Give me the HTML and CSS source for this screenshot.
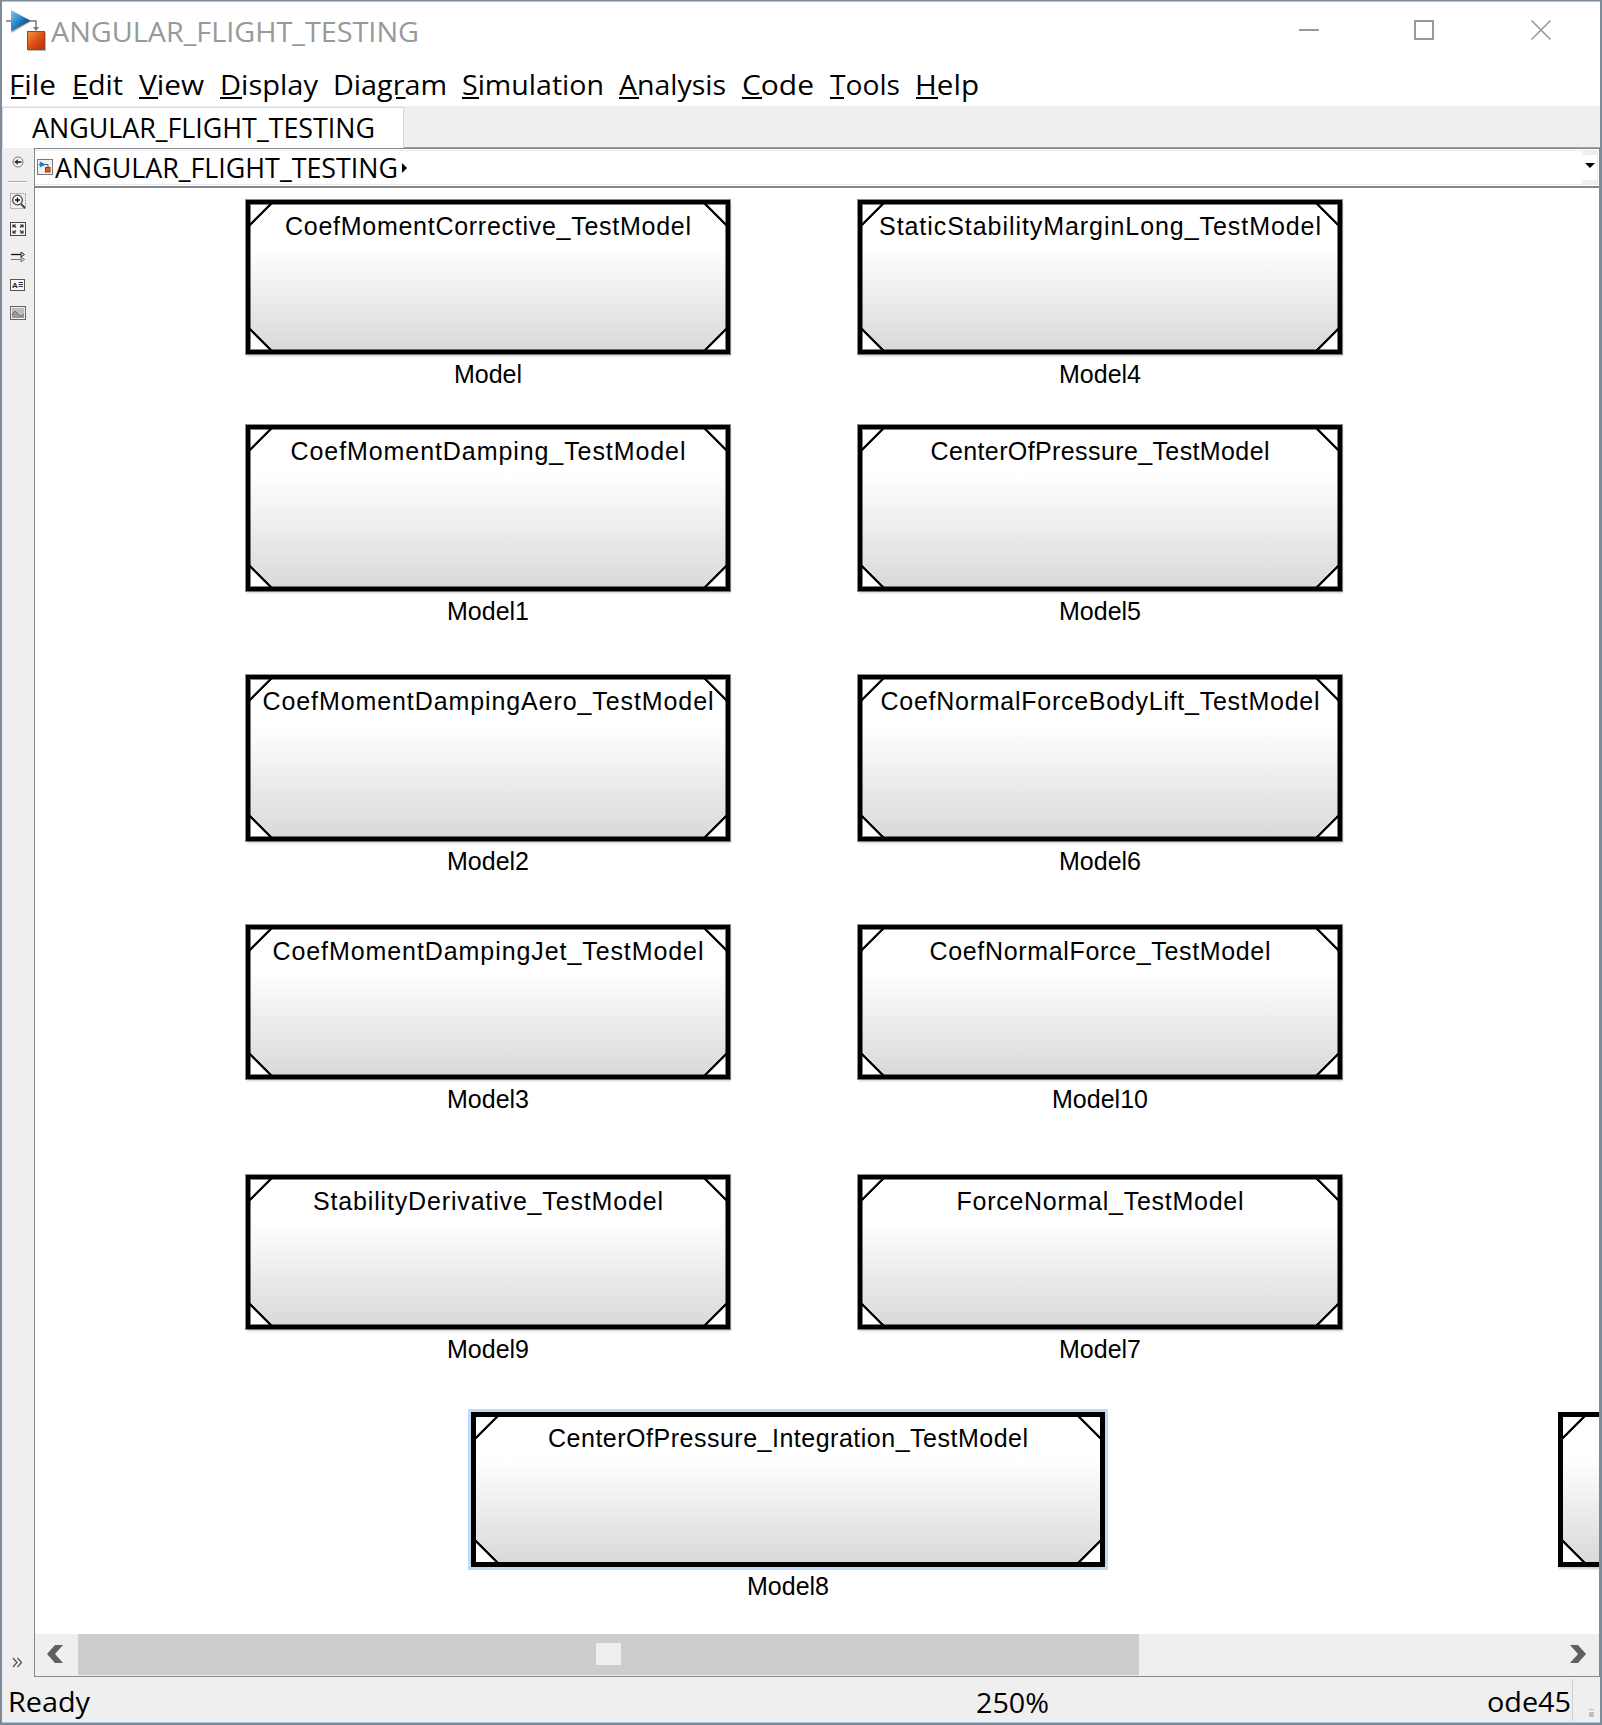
FILE: index.html
```html
<!DOCTYPE html>
<html lang="en">
<head>
<meta charset="utf-8">
<title>ANGULAR_FLIGHT_TESTING</title>
<link rel="stylesheet" href="styles.css">
</head>
<body>
<svg width="0" height="0" class="defs">
  <defs>
    <linearGradient id="blue" x1="0" y1="0" x2="1" y2="1"><stop offset="0" stop-color="#8cc8ee"/><stop offset=".4" stop-color="#2f8fce"/><stop offset=".75" stop-color="#0c4a8a"/></linearGradient>
    <linearGradient id="orange" x1="0" y1="0" x2="1" y2="1"><stop offset="0" stop-color="#f0a040"/><stop offset=".45" stop-color="#e0561a"/><stop offset="1" stop-color="#b02c08"/></linearGradient>
  </defs>
</svg>
<div class="window">
  <header class="titlebar">
    <svg class="app-icon" width="42" height="44" viewBox="0 0 42 44">
      <path d="M0 12h6M24 12h6v9" fill="none" stroke="#777" stroke-width="1.400"/>
      <path d="M27 18h6l-3 4z" fill="#777"/>
      <path d="M6 2.500V24L26 12z" fill="#888" opacity=".6"/>
      <path d="M5 1V22.500L24.500 11.800z" fill="url(#blue)"/>
      <rect x="22" y="23.500" width="18" height="18.500" fill="#888" opacity=".6"/>
      <rect x="21.500" y="22.500" width="17" height="18" fill="url(#orange)" stroke="#a8401c"/>
    </svg>
    <svg class="ui-text title" width="380" height="50"><text x="1" y="34" textLength="368" lengthAdjust="spacingAndGlyphs">ANGULAR_FLIGHT_TESTING</text></svg>
    <div class="controls">
      <svg class="minimize" width="22" height="22"><path d="M1 11h20" stroke="#999" stroke-width="2"/></svg>
      <svg width="22" height="22"><rect x="2" y="2" width="18" height="18" fill="none" stroke="#999" stroke-width="2"/></svg>
      <svg width="22" height="22"><path d="M1.500 1.500L20.500 20.500M20.500 1.500L1.500 20.500" stroke="#999" stroke-width="1.600"/></svg>
    </div>
  </header>
  <nav class="menubar">
    <svg class="ui-text" width="62" height="44"><text x="-1" y="33" textLength="47" lengthAdjust="spacingAndGlyphs">File</text><path d="M1 36h15.500"/></svg>
    <svg class="ui-text" width="67" height="44"><text x="0" y="33" textLength="51" lengthAdjust="spacingAndGlyphs">Edit</text><path d="M1 36h15"/></svg>
    <svg class="ui-text" width="81" height="44"><text x="0" y="33" textLength="65" lengthAdjust="spacingAndGlyphs">View</text><path d="M0 36h19"/></svg>
    <svg class="ui-text" width="113" height="44"><text x="0" y="33" textLength="98" lengthAdjust="spacingAndGlyphs">Display</text><path d="M0 36h22"/></svg>
    <svg class="ui-text" width="129" height="44"><text x="0" y="33" textLength="114" lengthAdjust="spacingAndGlyphs">Diagram</text><path d="M63 36h9.500"/></svg>
    <svg class="ui-text" width="157" height="44"><text x="0" y="33" textLength="142" lengthAdjust="spacingAndGlyphs">Simulation</text><path d="M0 36h17"/></svg>
    <svg class="ui-text" width="123" height="44"><text x="0" y="33" textLength="107" lengthAdjust="spacingAndGlyphs">Analysis</text><path d="M0 36h20"/></svg>
    <svg class="ui-text" width="88" height="44"><text x="0" y="33" textLength="72" lengthAdjust="spacingAndGlyphs">Code</text><path d="M0 36h20"/></svg>
    <svg class="ui-text" width="86" height="44"><text x="0" y="33" textLength="70" lengthAdjust="spacingAndGlyphs">Tools</text><path d="M0 36h14"/></svg>
    <svg class="ui-text" width="70" height="44"><text x="-1" y="33" textLength="64" lengthAdjust="spacingAndGlyphs">Help</text><path d="M0 36h22"/></svg>
  </nav>
  <div class="tabs">
    <div class="tab"><svg class="ui-text small" width="360" height="38"><text x="0" y="30" textLength="343" lengthAdjust="spacingAndGlyphs">ANGULAR_FLIGHT_TESTING</text></svg></div>
    <div class="tab-rest"></div>
  </div>
  <div class="workspace">
    <aside class="palette">
      <svg class="p-back" width="12" height="12" viewBox="0 0 12 12"><circle cx="6" cy="6" r="5" fill="#f8f8f8" stroke="#777"/><path d="M9.500 6H5" stroke="#333" stroke-width="1.800"/><path d="M2.200 6l3.600-3v6z" fill="#333"/></svg>
      <div class="rule"></div>
      <svg class="p-zoom" width="16" height="16" viewBox="0 0 16 16"><rect x=".5" y=".5" width="15" height="15" fill="none" stroke="#999" stroke-dasharray="2 1"/><circle cx="7.500" cy="7" r="4.800" fill="#fff" stroke="#444" stroke-width="1.300"/><path d="M5 7h5M7.500 4.500v5" stroke="#111" stroke-width="1.400"/><path d="M11 11l4 4" stroke="#444" stroke-width="2"/></svg>
      <svg class="p-fit" width="16" height="14" viewBox="0 0 16 14"><rect x=".5" y=".5" width="15" height="13" fill="#f7f7f7" stroke="#444"/><path d="M3 5.500V3h3M3 3l3 2.500M13 5.500V3h-3M13 3l-3 2.500M3 8.500V11h3M3 11l3-2.500M13 8.500V11h-3M13 11l-3-2.500" fill="none" stroke="#333" stroke-width="1.200"/></svg>
      <svg class="p-arrows" width="16" height="12" viewBox="0 0 16 12"><path d="M1 3.500h11" stroke="#111" stroke-width="1.300"/><path d="M11 1.200l3.500 2.300-3.500 2.300z" fill="#eee" stroke="#222"/><path d="M1 8.500h11" stroke="#777"/><path d="M11 6.200l3.500 2.300-3.500 2.300z" fill="#eee" stroke="#666"/></svg>
      <svg class="p-note" width="15" height="12" viewBox="0 0 15 12"><rect x=".5" y=".5" width="14" height="11" fill="#f8f8f8" stroke="#555"/><text x="2" y="8.800">A</text><path d="M8.500 3.500h4.500M8.500 5.500h4.500M8.500 7.500h4.500" stroke="#333"/></svg>
      <svg class="p-image" width="16" height="14" viewBox="0 0 16 14"><rect x=".5" y=".5" width="15" height="13" fill="#eee" stroke="#666"/><rect x="2" y="2" width="12" height="10" fill="#bdbdbd"/><path d="M2 9C4 4 6 5 8 8s4 2 6 0v4H2z" fill="#999"/><path d="M2 9C4 4 6 5 8 8s4 2 6 0" fill="none" stroke="#666"/></svg>
      <svg class="p-more" width="11" height="11" viewBox="0 0 11 11"><path d="M1 1l4 4.500-4 4.500M5.500 1l4 4.500-4 4.500" fill="none" stroke="#555" stroke-width="1.300"/></svg>
    </aside>
    <main class="editor">
      <div class="breadcrumb">
        <svg class="crumb-icon" width="16" height="16" viewBox="0 0 16 16"><rect x=".5" y=".5" width="15" height="15" fill="#eef0f2" stroke="#777"/><path d="M2 5.500h1M8 5.500h3v3" fill="none" stroke="#555"/><path d="M2.800 2.500v6l6-3z" fill="#1f7fc0"/><rect x="8.500" y="8.500" width="4.500" height="4.500" fill="#e0602a" stroke="#a83210"/></svg>
        <svg class="ui-text small" width="344" height="32"><text x="1" y="25.500" textLength="343" lengthAdjust="spacingAndGlyphs">ANGULAR_FLIGHT_TESTING</text></svg>
        <svg class="crumb-arrow" width="6" height="10"><path d="M0 0l5 5-5 5z"/></svg>
        <div class="drop"><svg width="10" height="5"><path d="M0 0h10L5 5z"/></svg></div>
      </div>
      <div class="canvas">
        <div class="node c1 r1"><div class="box"><svg><text x="242" y="35" textLength="406">CoefMomentCorrective_TestModel</text></svg></div><div class="name">Model</div></div>
        <div class="node c2 r1"><div class="box"><svg><text x="242" y="35" textLength="442">StaticStabilityMarginLong_TestModel</text></svg></div><div class="name">Model4</div></div>
        <div class="node c1 r2"><div class="box tall"><svg><text x="242" y="35" textLength="395">CoefMomentDamping_TestModel</text></svg></div><div class="name">Model1</div></div>
        <div class="node c2 r2"><div class="box tall"><svg><text x="242" y="35" textLength="339">CenterOfPressure_TestModel</text></svg></div><div class="name">Model5</div></div>
        <div class="node c1 r3"><div class="box tall"><svg><text x="242" y="35" textLength="451">CoefMomentDampingAero_TestModel</text></svg></div><div class="name">Model2</div></div>
        <div class="node c2 r3"><div class="box tall"><svg><text x="242" y="35" textLength="439">CoefNormalForceBodyLift_TestModel</text></svg></div><div class="name">Model6</div></div>
        <div class="node c1 r4"><div class="box"><svg><text x="242" y="35" textLength="431">CoefMomentDampingJet_TestModel</text></svg></div><div class="name">Model3</div></div>
        <div class="node c2 r4"><div class="box"><svg><text x="242" y="35" textLength="341">CoefNormalForce_TestModel</text></svg></div><div class="name">Model10</div></div>
        <div class="node c1 r5"><div class="box"><svg><text x="242" y="35" textLength="350">StabilityDerivative_TestModel</text></svg></div><div class="name">Model9</div></div>
        <div class="node c2 r5"><div class="box"><svg><text x="242" y="35" textLength="287">ForceNormal_TestModel</text></svg></div><div class="name">Model7</div></div>
        <div class="node wide selected r6"><div class="box"><svg><text x="317" y="35" textLength="480">CenterOfPressure_Integration_TestModel</text></svg></div><div class="name">Model8</div></div>
        <div class="node edge r6"><div class="box"></div></div>
      </div>
      <div class="scrollbar">
        <div class="arrow left"><svg width="16" height="18"><path d="M8 0h8L8 9l8 9H8L0 9z"/></svg></div>
        <div class="thumb"><div class="grip"></div></div>
        <div class="track"></div>
        <div class="arrow"><svg width="16" height="18"><path d="M8 0H0l8 9-8 9h8l8-9z"/></svg></div>
      </div>
    </main>
  </div>
  <footer class="status">
    <svg class="ui-text" width="100" height="44"><text x="-2" y="35" textLength="82" lengthAdjust="spacingAndGlyphs">Ready</text></svg>
    <svg class="ui-text zoom" width="80" height="44"><text x="0" y="36" textLength="73" lengthAdjust="spacingAndGlyphs">250%</text></svg>
    <svg class="ui-text solver" width="85" height="44"><text x="1" y="35" textLength="84" lengthAdjust="spacingAndGlyphs">ode45</text></svg>
    <div class="size-grip"></div>
  </footer>
</div>
</body>
</html>
```
FILE: styles.css
```css
* { box-sizing: border-box; }
body { margin: 0; background: #fff; }
svg { display: block; flex: none; }
.defs { position: absolute; }

.window {
  width: 1602px;
  height: 1725px;
  display: flex;
  flex-direction: column;
  background: #efefef;
  border: 2px solid #7d8b99;
  border-top-width: 1px;
  overflow: hidden;
}

.ui-text { overflow: visible; fill: #000; stroke: none; }
.ui-text text { font: 28px "Open Sans", "Noto Sans", sans-serif; }
.ui-text path { stroke: #000; stroke-width: 2; }
.ui-text.small text { font-size: 26.5px; }

.titlebar {
  height: 61px;
  flex: none;
  display: flex;
  align-items: flex-start;
  background: #fff;
  border-top: 1px solid #a9c6de;
  padding: 6px 48px 0 4px;
}
.ui-text.title { fill: #999; margin-left: 2px; }
.app-icon { margin-top: 1px; }
.controls { display: flex; gap: 95px; margin: 11px 0 0 auto; }
.minimize { margin-right: -2px; }

.menubar {
  height: 44px;
  flex: none;
  display: flex;
  background: #fff;
  padding-left: 8px;
}

.tabs { height: 42px; flex: none; display: flex; background: #efefef; }
.tab {
  width: 402px;
  margin-top: 1px;
  background: #fff;
  border: 1px solid #d9d9d9;
  border-bottom: 0;
  padding-left: 29px;
}
.tab-rest { flex: 1; border-bottom: 1px solid #a0a0a0; }

.workspace { height: 1529px; flex: none; display: flex; }
.palette {
  width: 32px;
  flex: none;
  display: flex;
  flex-direction: column;
  align-items: center;
  padding: 0 1px 9px 0;
}
.p-back { margin: 8px 0 13px; }
.rule { width: 19px; height: 1px; background: #aaa; box-shadow: 0 1px #fff; }
.p-zoom { margin-top: 11px; }
.p-fit { margin-top: 13px; }
.p-arrows { margin-top: 15px; }
.p-note { margin-top: 16px; }
.p-note text { font: bold 8px "Liberation Sans", sans-serif; fill: #222; }
.p-image { margin-top: 15px; }
.p-more { margin-top: auto; }

.editor {
  flex: 1;
  display: flex;
  flex-direction: column;
  border: 1px solid #828790;
  border-right-color: #7d8b99;
}
.breadcrumb {
  height: 39px;
  flex: none;
  display: flex;
  align-items: center;
  background: #fff;
  border-bottom: 2px solid #828790;
  box-shadow: inset 0 1px #fff, inset 0 2px #eee, inset 0 -1px #fff, inset 0 -2px #eee;
  padding: 1px 1px 1px 2px;
}
.crumb-icon { margin: 0 1px 2px 0; }
.crumb-arrow { margin-left: 4px; }
.drop {
  margin-left: auto;
  width: 16px;
  height: 34px;
  border: 1px solid #efefef;
  border-width: 4px 1px 5px 0;
  display: flex;
  align-items: center;
  justify-content: center;
  padding-bottom: 4px;
}

.canvas { position: relative; height: 1446px; flex: none; background: #fff; overflow: hidden; }
.node { position: absolute; width: 484px; }
.c1 { left: 211px; }
.c2 { left: 823px; }
.wide { left: 436px; width: 634px; }
.edge { left: 1523px; width: 484px; }
.r1 { top: 12px; }
.r2 { top: 237px; }
.r3 { top: 487px; }
.r4 { top: 737px; }
.r5 { top: 987px; }
.r6 { top: 1224px; }
.box {
  height: 154px;
  border: 4px solid #000;
  box-shadow: 0 0 0 1px rgba(0,0,0,.45), 1px 2px 2px rgba(0,0,0,.2), inset 0 0 0 1px rgba(0,0,0,.5);
  background:
    linear-gradient(135deg, #fff 13.200px, #000 14px, #000 15.500px, transparent 16.300px) left top / 24px 24px no-repeat,
    linear-gradient(225deg, #fff 13.200px, #000 14px, #000 15.500px, transparent 16.300px) right top / 24px 24px no-repeat,
    linear-gradient(45deg, #fff 13.200px, #000 14px, #000 15.500px, transparent 16.300px) left bottom / 24px 24px no-repeat,
    linear-gradient(315deg, #fff 13.200px, #000 14px, #000 15.500px, transparent 16.300px) right bottom / 24px 24px no-repeat,
    linear-gradient(#fff 29%, #d9d9d9);
}
.tall { height: 166px; }
.r6 .box {
  height: 155px;
  border-width: 5px;
  box-shadow: 1px 2px 2px rgba(0,0,0,.2);
}
.selected .box { box-shadow: 0 0 0 3px #c1d9f8; }
.box svg { width: 484px; height: 60px; margin: -4px; overflow: visible; }
.r6 .box svg { width: 634px; margin: -5px; }
.box text { font: 25px "Liberation Sans", Arial, sans-serif; text-anchor: middle; }
.name {
  margin-top: 6px;
  text-align: center;
  font: 25px/28px "Liberation Sans", Arial, sans-serif;
}
.r6 .name { margin-top: 5px; }

.scrollbar { height: 42px; flex: none; display: flex; background: #efefef; padding-bottom: 1px; }
.arrow { width: 43px; display: flex; align-items: center; justify-content: center; padding-bottom: 1px; fill: #606060; }
.arrow.left { padding-right: 4px; }
.thumb { width: 1061px; background: #cdcdcd; display: flex; align-items: center; justify-content: center; padding-bottom: 1px; }
.grip { width: 25px; height: 22px; background: #efefef; }
.track { flex: 1; }

.status { flex: 1; display: flex; align-items: flex-start; padding-left: 8px; border-bottom: 1px solid #a9c6de; }
.zoom { margin-left: 866px; }
.solver { margin-left: auto; }
.size-grip {
  width: 28px;
  height: 42px;
  margin: 2px 0 0 1px;
  border-left: 1px solid #d0d0d0;
  background:
    linear-gradient(#bfbfbf, #bfbfbf) 16px 33px / 5px 5px no-repeat,
    linear-gradient(#bfbfbf, #bfbfbf) 16px 30px / 5px 1px no-repeat;
}
```
